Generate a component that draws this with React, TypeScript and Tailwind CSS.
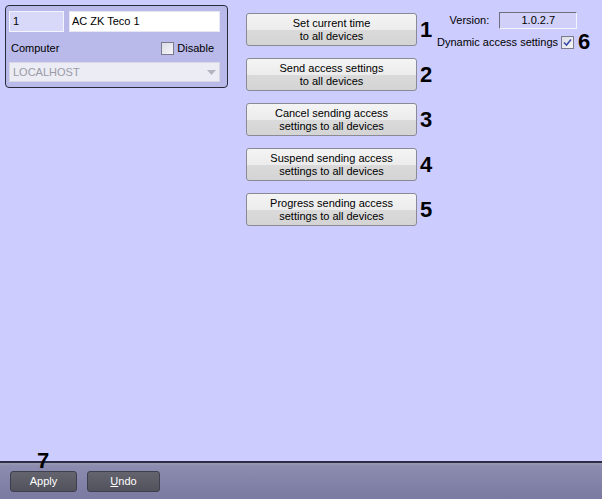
import React from "react";

const font = { fontFamily: '"Liberation Sans", Arial, sans-serif' };

const actions = [
  ["Set current time", "to all devices"],
  ["Send access settings", "to all devices"],
  ["Cancel sending access", "settings to all devices"],
  ["Suspend sending access", "settings to all devices"],
  ["Progress sending access", "settings to all devices"],
];

const Checkbox: React.FC<{ checked?: boolean }> = ({ checked }) => (
  <span className="flex h-[13px] w-[13px] shrink-0 items-center justify-center border border-[#7b7b8c] bg-gradient-to-br from-[#dcdce6] to-[#f6f6fa]">
    {checked && (
      <svg width="9" height="9" viewBox="0 0 9 9">
        <path d="M1 4.5 L3.5 7 L8 1.5" fill="none" stroke="#3c4ea8" strokeWidth="1.6" />
      </svg>
    )}
  </span>
);

const App: React.FC = () => {
  return (
    <div style={font} className="flex h-[499px] w-[602px] flex-col bg-[#ccccff] text-[11px] text-black">
      <div className="flex flex-1 items-start">
        {/* object panel */}
        <div className="mt-[5px] ml-[5px] h-[83px] w-[223px] shrink-0 rounded-[4px] border border-[#2a2a3a] bg-[#b9b9ea] px-[3px] pt-[5px]">
          <div className="flex gap-[5px]">
            <div className="flex h-[21px] w-[55px] items-center border border-[#f4f4ff] bg-[#d8d8f8] px-[3px] text-[11px]">
              1
            </div>
            <div className="flex h-[21px] w-[151px] items-center border border-[#e8e8f4] bg-white px-[2px] text-[11px]">
              AC ZK Teco 1
            </div>
          </div>
          <div className="mt-[9px] flex h-[14px] items-center pl-[2px]">
            <span>Computer</span>
            <span className="mr-[10px] ml-auto flex items-center gap-[3px]">
              <Checkbox />
              <span>Disable</span>
            </span>
          </div>
          <div className="mt-[7px] flex h-[20px] w-[211px] items-center border border-[#d8d8e4] bg-[#ececf4] pl-[3px] text-[#9a9aa6]">
            LOCALHOST
            <svg className="mr-[3px] ml-auto" width="9" height="5" viewBox="0 0 9 5">
              <path d="M0 0 H9 L4.5 5 Z" fill="#b4b4c0" />
            </svg>
          </div>
        </div>

        {/* action buttons */}
        <div className="mt-[13px] ml-[18px] flex shrink-0 flex-col gap-[12px]">
          {actions.map((a, i) => (
            <div key={i} className="flex items-center gap-[3px]">
              <button className="flex h-[33px] w-[171px] flex-col items-center justify-center rounded-[3px] border border-[#8a8a96] bg-[linear-gradient(#f4f4f4_0%,#ececec_50%,#dadada_51%,#d4d4d4_100%)] text-[11px] leading-[13px]">
                <span>{a[0]}</span>
                <span>{a[1]}</span>
              </button>
              <span className="w-[13px] text-[22px] leading-none font-bold">{i + 1}</span>
            </div>
          ))}
        </div>

        {/* version and dynamic settings */}
        <div className="mt-[12px] ml-[4px] flex shrink-0 flex-col items-end whitespace-nowrap">
          <div className="flex items-center">
            <span className="mr-[10px]">Version:</span>
            <div className="flex h-[17px] w-[78px] items-center justify-center border border-[#6e6e7e] border-r-[#f4f4ff] border-b-[#f4f4ff] bg-[#d0d0f8]">
              1.0.2.7
            </div>
            <span className="w-[13px]" />
          </div>
          <div className="mt-[2px] flex items-center">
            <span className="mr-[3px]">Dynamic access settings</span>
            <Checkbox checked />
            <span className="ml-[4px] text-[22px] leading-none font-bold">6</span>
          </div>
        </div>
      </div>

      {/* bottom bar */}
      <div className="relative flex h-[38px] items-start gap-[10px] border-t-2 border-[#2c2c44] bg-[linear-gradient(#9a9ab4_0%,#8c8cb0_8%,#7a7aa2_100%)] pt-[8px] pl-[10px]">
        <span className="absolute top-[-13px] left-[37px] text-[22px] leading-none font-bold">7</span>
        <button className="h-[21px] w-[67px] rounded-[3px] border border-[#3e3e4e] bg-[linear-gradient(#64646e,#52525c)] text-[11px] text-white">
          Apply
        </button>
        <button className="h-[21px] w-[73px] rounded-[3px] border border-[#3e3e4e] bg-[linear-gradient(#64646e,#52525c)] text-[11px] text-white">
          <span className="underline">U</span>ndo
        </button>
      </div>
    </div>
  );
};

export default App;
